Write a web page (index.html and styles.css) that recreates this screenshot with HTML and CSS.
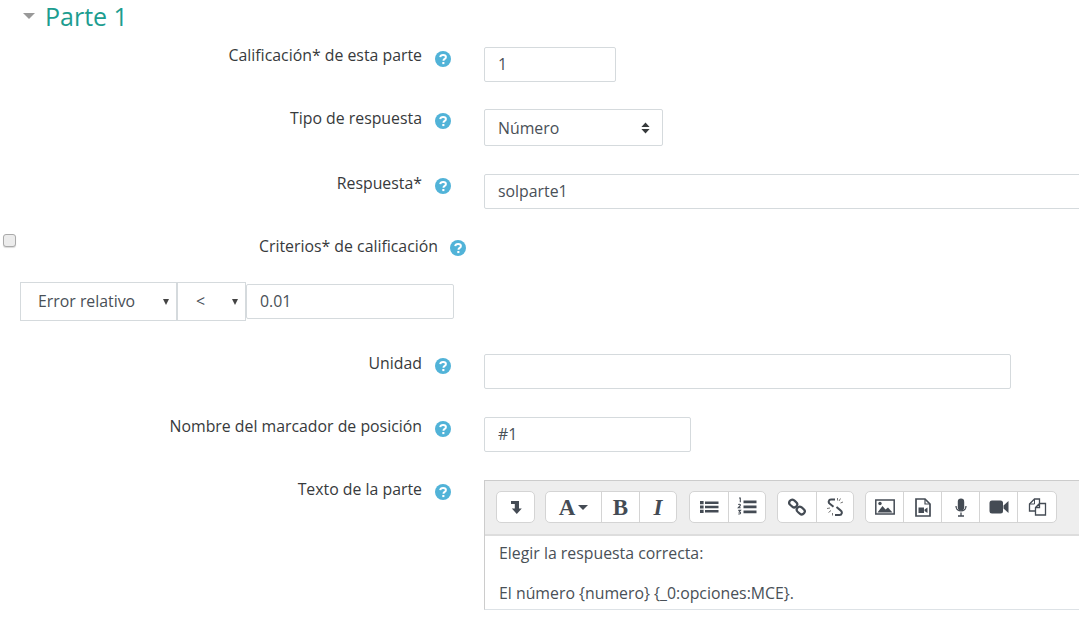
FILE: index.html
```html
<!DOCTYPE html>
<html lang="es">
<head>
    <meta charset="UTF-8">
    <meta name="viewport" content="width=device-width, initial-scale=1.0">
    <title>Parte 1</title>
    <link rel="stylesheet" href="styles.css">
</head>
<body>
    <svg class="icon-defs" width="0" height="0">
        <symbol id="help" viewBox="0 0 16 16">
            <circle cx="8" cy="8" r="8" fill="#51b3d8"/>
            <path d="M5.200 6.200c.2-1.500 1.400-2.300 2.900-2.300 1.600 0 2.800.9 2.800 2.200 0 1-.6 1.600-1.500 2.100-.6.400-.9.700-.9 1.500" fill="none" stroke="#fff" stroke-width="2"/>
            <rect x="7.300" y="11" width="2.100" height="2.100" fill="#fff"/>
        </symbol>
    </svg>

    <h2 class="section-title"><span class="section-caret"></span>Parte 1</h2>

    <div class="row row-grade">
        <label class="row-label">Calificación* de esta parte</label>
        <svg class="help"><use href="#help"/></svg>
        <input class="field field-short" type="text" value="1">
    </div>

    <div class="row row-type">
        <label class="row-label">Tipo de respuesta</label>
        <svg class="help"><use href="#help"/></svg>
        <div class="select-wrap select-type">
            <select class="field-select"><option>Número</option></select>
            <svg class="updown" width="9" height="12" viewBox="0 0 9 12"><path d="M4.500 0.500 8.600 5H.4zM4.500 11.500.4 7h8.200z" fill="#373a3c"/></svg>
        </div>
    </div>

    <div class="row row-answer">
        <label class="row-label">Respuesta*</label>
        <svg class="help"><use href="#help"/></svg>
        <input class="field field-full" type="text" value="solparte1">
    </div>

    <div class="row row-criteria">
        <input class="check" type="checkbox">
        <label class="row-label">Criterios* de calificación</label>
        <svg class="help"><use href="#help"/></svg>
    </div>

    <div class="criteria-controls">
        <div class="select-wrap select-error">
            <select class="field-select"><option>Error relativo</option></select>
            <span class="native-arrow"></span>
        </div>
        <div class="select-wrap select-op">
            <select class="field-select"><option>&lt;</option></select>
            <span class="native-arrow"></span>
        </div>
        <input class="field field-tol" type="text" value="0.01">
    </div>

    <div class="row row-unit">
        <label class="row-label">Unidad</label>
        <svg class="help"><use href="#help"/></svg>
        <input class="field field-unit" type="text">
    </div>

    <div class="row row-marker">
        <label class="row-label">Nombre del marcador de posición</label>
        <svg class="help"><use href="#help"/></svg>
        <input class="field field-marker" type="text" value="#1">
    </div>

    <div class="row row-text">
        <label class="row-label">Texto de la parte</label>
        <svg class="help"><use href="#help"/></svg>
        <div class="editor">
            <div class="toolbar">
                <div class="btn-group">
                    <button class="btn">
                        <svg width="14" height="15" viewBox="0 0 14 15"><path d="M2 1h8v7.500h2.800L7.800 14 2.800 8.500h3V4H2z" fill="#444b54"/></svg>
                    </button>
                </div>
                <div class="btn-group">
                    <button class="btn btn-font"><span class="serif-a">A</span><span class="font-caret"></span></button>
                    <button class="btn"><span class="serif-b">B</span></button>
                    <button class="btn"><span class="serif-i">I</span></button>
                </div>
                <div class="btn-group btn-group-list">
                    <button class="btn">
                        <svg width="20" height="16" viewBox="0 0 20 16"><path d="M1 2h3.600v3.200H1zM1 6.400h3.600v3.200H1zM1 10.800h3.600V14H1zM6 2.400h13.500v2.600H6zM6 6.700h13.500v2.600H6zM6 11h13.500v2.600H6z" fill="#444b54"/></svg>
                    </button>
                    <button class="btn">
                        <svg width="20" height="20" viewBox="0 0 20 20"><path d="M6.500 3.500h13v2.700h-13zM6.500 8.500h13v2.700h-13zM6.500 13.500h13v2.700h-13z" fill="#444b54"/><path d="M2 1h1.300v4.300M1.200 7.600c1.500-.8 2.600 0 2 1-.4.700-1.300 1.300-2 2.200h2.400M1.300 13.400h2.200l-1.200 1.500c1.800 0 1.800 2.500-1 2.100" fill="none" stroke="#444b54" stroke-width="1.100"/></svg>
                    </button>
                </div>
                <div class="btn-group">
                    <button class="btn">
                        <svg width="18" height="18" viewBox="0 0 18 18"><g fill="none" stroke="#444b54" stroke-width="2.200"><rect x="1" y="2.500" width="8.500" height="6" rx="3" transform="rotate(40 5.200 5.500)"/><rect x="8.500" y="9.500" width="8.500" height="6" rx="3" transform="rotate(40 12.700 12.500)"/></g></svg>
                    </button>
                    <button class="btn">
                        <svg width="18" height="20" viewBox="0 0 18 20"><g fill="none" stroke="#444b54" stroke-width="2"><path d="M9 2.500H5C2.500 2.500 2 5.500 3.800 6.800l3.700 3M9 18h4.500c2.600 0 3-3.200 1.300-4.400L10.500 10"/></g><path d="M11.500 1v2.500M14.500 1.500 13 4M17 5l-2.500 1M1 11.500l3-.5M2.500 15.500 5 13.500M6.500 18.500V16" fill="none" stroke="#666" stroke-width=".9"/></svg>
                    </button>
                </div>
                <div class="btn-group btn-group-media">
                    <button class="btn">
                        <svg width="20" height="16" viewBox="0 0 20 16"><path d="M.8 1h18.400v14H.8z" fill="#fff" stroke="#444b54" stroke-width="1.500"/><path d="M2.500 13.500 7.500 7l3 3.500 2.500-2 4.500 5z" fill="#444b54"/><circle cx="5" cy="4.500" r="1.700" fill="#444b54"/></svg>
                    </button>
                    <button class="btn">
                        <svg width="16" height="19" viewBox="0 0 16 19"><path d="M1 1h9l5 5v12H1z" fill="#fff" stroke="#444b54" stroke-width="1.700"/><path d="M10 1v5h5" fill="none" stroke="#444b54" stroke-width="1.200"/><path d="M3.500 9.500h5.500v5.500H3.500zM9.500 11.500l3-2v5.500l-3-2z" fill="#444b54"/></svg>
                    </button>
                    <button class="btn">
                        <svg width="12" height="19" viewBox="0 0 12 19"><rect x="2.800" y=".5" width="6.400" height="12" rx="3.200" fill="#444b54"/><path d="M1 8c0 6.500 10 6.500 10 0M6 14.500v3M3 18h6" fill="none" stroke="#444b54" stroke-width="1.300"/></svg>
                    </button>
                    <button class="btn">
                        <svg width="20" height="14" viewBox="0 0 20 14"><rect x=".5" y=".5" width="13.500" height="13" rx="2.500" fill="#444b54"/><path d="M14.500 5.500 19.500 1v12l-5-4.500z" fill="#444b54"/></svg>
                    </button>
                    <button class="btn">
                        <svg width="19" height="18" viewBox="0 0 19 18"><path d="M11.500 5V1H6.500L1.500 6v7H7" fill="none" stroke="#444b54" stroke-width="1.300"/><path d="M6.500 1v5h-5" fill="none" stroke="#444b54"/><path d="M17.500 5.500V17H7.500v-7.500l4-4zM11.500 5.500v4h-4" fill="none" stroke="#444b54" stroke-width="1.300"/></svg>
                    </button>
                </div>
            </div>
            <div class="editor-body">
                <p>Elegir la respuesta correcta:</p>
                <p>El número {numero} {_0:opciones:MCE}.</p>
            </div>
        </div>
    </div>
</body>
</html>
```

FILE: styles.css
```css
html, body {
    height: 627px;
    overflow: hidden;
}
body {
    margin: 0;
    font-family: "Open Sans", sans-serif;
    font-size: 15.85px;
    color: #373a3c;
    background: #fff;
}
.icon-defs {
    position: absolute;
}
.section-title {
    display: flex;
    align-items: center;
    height: 36px;
    margin: 0 0 11px 0;
    padding: 0 0 4px 23px;
    box-sizing: border-box;
    font-size: 25px;
    font-weight: 400;
    color: #1d9d90;
}
.section-caret {
    width: 0;
    height: 0;
    margin-right: 10px;
    margin-top: -1px;
    border-left: 6px solid transparent;
    border-right: 6px solid transparent;
    border-top: 6px solid #999;
}

/* form rows */
.row {
    display: flex;
    align-items: flex-start;
}
.row-label {
    width: 422px;
    flex: none;
    text-align: right;
    line-height: 20px;
    margin-top: -1px;
}
.help {
    width: 16px;
    height: 16px;
    flex: none;
    margin: 4px 33px 0 13px;
}
.row-grade { margin-bottom: 27px; }
.row-type { margin-bottom: 28px; }
.row-answer { margin-bottom: 25px; }
.row-criteria { height: 30px; margin-bottom: 18px; }
.row-unit { margin-top: 33px; margin-bottom: 28px; }
.row-marker { margin-bottom: 28px; }

.row-grade .row-label {
    margin-top: -2px;
}
.row-criteria .row-label {
    margin-top: 2px;
}
.row-criteria .help {
    margin: 6px 0 0 12px;
}
.check {
    flex: none;
    box-sizing: border-box;
    width: 13px;
    height: 13px;
    margin: 0 0 0 3px;
    appearance: none;
    -webkit-appearance: none;
    background: #ececec;
    border: 1px solid #aaa;
    border-radius: 3px;
    box-shadow: 0 1px 1px rgba(0,0,0,0.15);
}

/* inputs and selects */
.field, .field-select {
    box-sizing: border-box;
    height: 35px;
    padding: 0 13px 2px;
    border: 1px solid #d5dadd;
    border-radius: 2px;
    background: #fff;
    font-family: inherit;
    font-size: 15.85px;
    color: #495057;
    outline: none;
}
.field-short { width: 132px; }
.field-full { width: 620px; flex: none; }
.field-unit { width: 527px; }
.field-marker { width: 207px; }
.field-tol { width: 208px; margin-top: 2px; }

.select-wrap {
    position: relative;
    flex: none;
}
.field-select {
    display: block;
    width: 100%;
    appearance: none;
    -webkit-appearance: none;
}
.select-type { width: 179px; height: 37px; }
.select-type .field-select { height: 37px; padding-top: 1px; padding-bottom: 0; }
.updown {
    position: absolute;
    top: 13px;
    right: 13px;
}
.criteria-controls {
    display: flex;
    align-items: flex-start;
    margin-left: 20px;
}
.select-error { width: 157px; }
.select-op { width: 69px; }
.select-error .field-select,
.select-op .field-select {
    height: 39px;
    padding-left: 17px;
    border-radius: 0;
}
.select-op .field-select { padding-left: 18px; }
.native-arrow {
    position: absolute;
    top: 17px;
    right: 8px;
    width: 0;
    height: 0;
    border-left: 3px solid transparent;
    border-right: 3px solid transparent;
    border-top: 6px solid #444;
}

/* editor */
.editor {
    flex: none;
    width: 640px;
    height: 130px;
    box-sizing: border-box;
    border-left: 1px solid #ccc;
    border-top: 1px solid #ccc;
    border-bottom: 1px solid #dde2e6;
}
.toolbar {
    display: flex;
    gap: 11px;
    box-sizing: border-box;
    height: 55px;
    padding: 10px 0 0 11px;
    background: #eee;
    border-bottom: 2px solid #ddd;
}
.btn-group {
    display: flex;
    height: 32px;
    box-sizing: border-box;
    background: #fff;
    border: 1px solid #d4d4d4;
    border-radius: 5px;
}
.btn-group:first-child {
    margin-right: -1px;
}
.btn-group-list {
    margin-left: 1px;
}
.btn {
    display: flex;
    align-items: center;
    justify-content: center;
    width: 38px;
    padding: 0;
    border: none;
    border-left: 1px solid #d4d4d4;
    background: none;
    color: #444b54;
}
.btn:first-child {
    border-left: none;
}
.btn:last-child {
    width: 37px;
}
.btn-font {
    width: 55px;
}
.btn-group-media .btn:first-child {
    width: 37px;
}
.btn-group-media .btn:last-child {
    width: 39px;
}
.serif-a, .serif-b, .serif-i {
    font-family: "Liberation Serif", serif;
    font-size: 23px;
    line-height: 1;
    font-weight: 700;
    color: #444b54;
}
.serif-i {
    font-style: italic;
}
.font-caret {
    width: 0;
    height: 0;
    margin-left: 3px;
    border-left: 5px solid transparent;
    border-right: 5px solid transparent;
    border-top: 5px solid #444b54;
}
.editor-body {
    padding: 6px 14px;
    color: #495057;
    line-height: 22px;
}
.editor-body p {
    margin: 0 0 18px 0;
}
```
